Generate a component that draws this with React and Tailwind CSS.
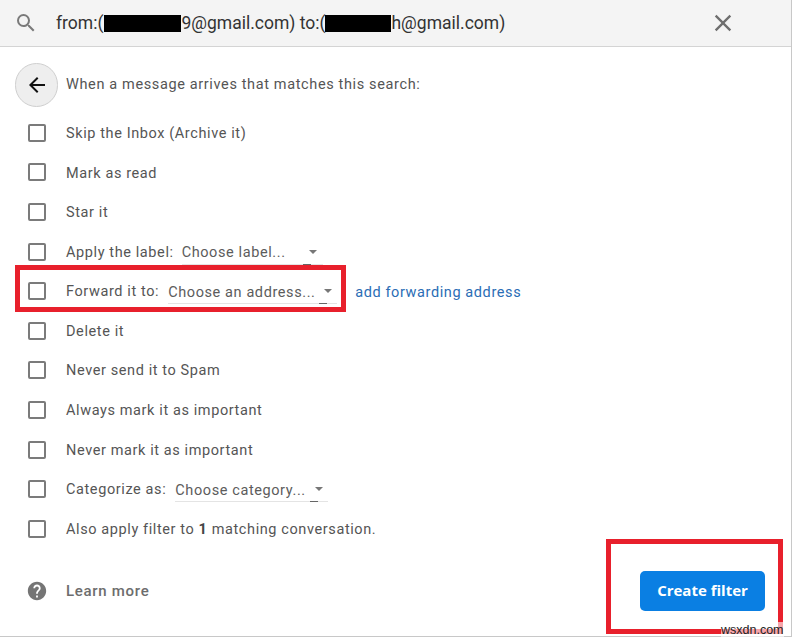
import React from "react";

const F = { fontFamily: '"Roboto", "Liberation Sans", sans-serif' };

function Box() {
  return <span className="w-[18px] h-[18px] shrink-0 border-2 border-[#7b7b7b] rounded-[2px] bg-white" />;
}

function Select({ text, width, dash, caret }) {
  return (
    <span className="relative flex items-center h-[24px] border-b border-[#e4e4e4]" style={{ width }}>
      <span className="pt-[2px] text-[#5c5c5c]">{text}</span>
      <span className="absolute top-[9px] w-0 h-0 border-l-[4px] border-r-[4px] border-t-[4px] border-l-transparent border-r-transparent border-t-[#777]" style={{ right: caret }} />
      <span className="absolute bottom-[-1px] h-px w-[8px] bg-[#666]" style={{ right: dash }} />
    </span>
  );
}

function Row({ children }) {
  return (
    <div className="h-[39.6px] flex items-center pl-[28px] text-[14.5px] tracking-[0.6px] text-[#555]">
      <Box />
      <div className="ml-[20px] pt-[2px] flex items-center">{children}</div>
    </div>
  );
}

function Icon({ d, className }) {
  return (
    <svg viewBox="0 0 24 24" className={className} fill="currentColor">
      <path d={d} />
    </svg>
  );
}

export default function App() {
  return (
    <div className="relative w-[794px] h-[639px] bg-white overflow-hidden" style={F}>
      <div className="w-[792px] h-[637px] border-r border-b border-[#c8c8c8] flex flex-col">
        <header className="h-[47px] shrink-0 bg-[#f4f4f4] border-b border-[#d4d4d4] flex items-center pl-[14px] pr-[54px]">
          <Icon
            className="w-[24px] h-[24px] text-[#7a7a7a]"
            d="M15.5 14h-.79l-.28-.27A6.47 6.47 0 0 0 16 9.5 6.5 6.5 0 1 0 9.5 16c1.61 0 3.09-.59 4.23-1.57l.27.28v.79l5 4.99L20.49 19l-4.99-5zm-6 0C7.01 14 5 11.99 5 9.5S7.01 5 9.5 5 14 7.01 14 9.5 11.99 14 9.5 14z"
          />
          <div className="ml-[18px] flex items-center text-[17.5px] text-[#333] whitespace-nowrap">
            <span className="pt-[1px]">from:(</span>
            <span className="w-[77px] h-[17px] ml-[1px] bg-black" />
            <span className="pt-[1px]">9@gmail.com) to:(</span>
            <span className="w-[66px] h-[17px] bg-black" />
            <span className="pt-[1px]">h@gmail.com)</span>
          </div>
          <Icon
            className="ml-auto w-[28px] h-[28px] text-[#6f6f6f]"
            d="M19 6.41 17.59 5 12 10.59 6.41 5 5 6.41 10.59 12 5 17.59 6.41 19 12 13.41 17.59 19 19 17.59 13.41 12z"
          />
        </header>

        <div className="h-[66px] shrink-0 flex items-center pl-[15px] pt-[9px] text-[14.5px] tracking-[0.63px] text-[#555]">
          <span className="w-[43px] h-[44px] rounded-full bg-[#eeeeee] border border-[#cfcfcf] flex items-center justify-center text-[#111]">
            <Icon className="w-[24px] h-[24px]" d="M20 11H7.83l5.59-5.59L12 4l-8 8 8 8 1.41-1.41L7.83 13H20v-2z" />
          </span>
          <span className="ml-[8px]">When a message arrives that matches this search:</span>
        </div>

        <Row>Skip the Inbox (Archive it)</Row>
        <Row>Mark as read</Row>
        <Row>Star it</Row>
        <Row>
          <span>Apply the label:</span>
          <span className="ml-[8px]"><Select text="Choose label..." width={141} dash={12} caret={6} /></span>
        </Row>
        <Row>
          <span>Forward it to:</span>
          <span className="ml-[9px]"><Select text="Choose an address..." width={169} dash={10} caret={5} /></span>
          <a className="ml-[18px] pt-[1px] text-[#2a6db5]">add forwarding address</a>
        </Row>
        <Row>Delete it</Row>
        <Row>Never send it to Spam</Row>
        <Row>Always mark it as important</Row>
        <Row>Never mark it as important</Row>
        <Row>
          <span>Categorize as:</span>
          <span className="ml-[9px]"><Select text="Choose category..." width={153} dash={10} caret={5} /></span>
        </Row>
        <Row>
          <span>Also apply filter to <b className="font-bold text-[#444]">1</b> matching conversation.</span>
        </Row>

        <footer className="flex-1 flex items-start pl-[26px] pr-[26px] pt-[22px]">
          <div className="flex items-center mt-[9px] text-[15px] tracking-[0.7px] text-[#6d6d6d] font-medium">
            <Icon
              className="w-[22px] h-[22px] text-[#757575]"
              d="M12 2C6.48 2 2 6.48 2 12s4.48 10 10 10 10-4.48 10-10S17.52 2 12 2zm1 17h-2v-2h2v2zm2.07-7.75l-.9.92C13.45 12.9 13 13.5 13 15h-2v-.5c0-1.1.45-2.1 1.17-2.83l1.24-1.26c.37-.36.59-.86.59-1.41 0-1.1-.9-2-2-2s-2 .9-2 2H8c0-2.21 1.79-4 4-4s4 1.79 4 4c0 .88-.36 1.68-.93 2.25z"
            />
            <span className="ml-[18px]">Learn more</span>
          </div>
          <button
            className="ml-auto w-[125px] h-[40px] rounded-[5px] bg-[#0a7fe3] text-white text-[15px] font-bold"
            style={{ fontFamily: '"Open Sans", sans-serif' }}
          >
            Create filter
          </button>
        </footer>
      </div>

      <div className="absolute left-[15px] top-[265px] w-[331px] h-[47px] border-[5px] border-[#e8202c]" />
      <div className="absolute left-[606px] top-[539px] w-[177px] h-[95px] border-[5px] border-[#e8202c]" />
      <span className="absolute left-[721px] top-[622px] text-[12.5px] leading-[16px] text-[#222] bg-white/60" style={{ fontFamily: '"Liberation Sans", sans-serif' }}>
        wsxdn.com
      </span>
    </div>
  );
}
